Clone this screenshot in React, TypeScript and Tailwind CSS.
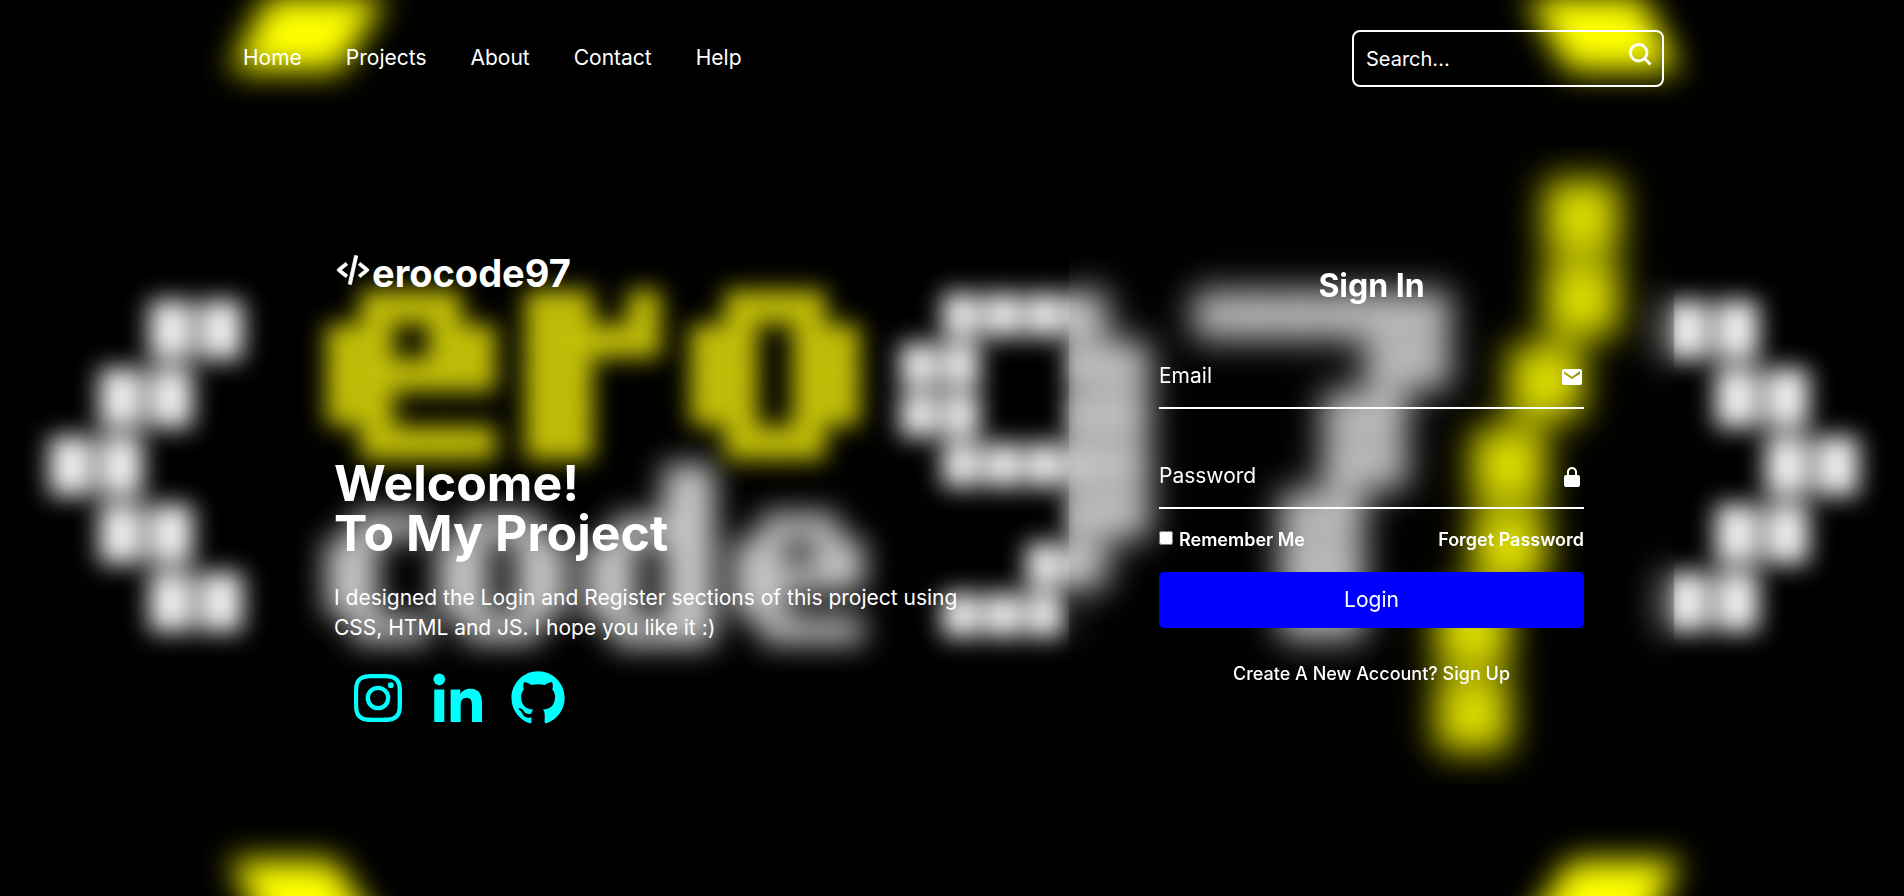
import type { ReactNode } from "react";
import {
  BiCodeAlt,
  BiLogoGithub,
  BiLogoInstagram,
  BiLogoLinkedin,
  BiSearch,
  BiSolidEnvelope,
  BiSolidLockAlt,
} from "react-icons/bi";

type Glyph = {
  x: number;
  y: number;
  w: number;
  h: number;
  gapX: number;
  gapY: number;
  fill: string;
  rows: string[];
};

const YELLOW = "#ccc808";
const GREY = "#c6c6c6";
const WHITE = "#f2f2f0";

const LETTER_E = [".###.", "##.##", "#####", "##...", ".####"];
const LETTER_O = [".###.", "##.##", "##.##", "##.##", ".###."];

const sharpGlyphs: Glyph[] = [
  { x: 46, y: 296, w: 50, h: 68, gapX: 7, gapY: 9, fill: WHITE, rows: ["..##", ".##.", "##..", ".##.", "..##"] },
  { x: 1662, y: 296, w: 50, h: 68, gapX: 7, gapY: 9, fill: WHITE, rows: ["##..", ".##.", "..##", ".##.", "##.."] },
  { x: 326, y: 290, w: 34, h: 34, gapX: 1, gapY: 1, fill: YELLOW, rows: LETTER_E },
  { x: 525, y: 290, w: 34, h: 34, gapX: 1, gapY: 1, fill: YELLOW, rows: ["##.#", "####", "##..", "##..", "##.."] },
  { x: 690, y: 290, w: 34, h: 34, gapX: 1, gapY: 1, fill: YELLOW, rows: LETTER_O },
  { x: 898, y: 290, w: 42, h: 50, gapX: 5, gapY: 6, fill: "#f0f0ee", rows: [".####.", "##..##", "##..##", ".#####", "....##", "...##.", ".###.."] },
  { x: 1193, y: 290, w: 43, h: 50, gapX: 4, gapY: 4, fill: "#dcdcda", rows: ["######", "....##", "...##.", "...##.", "..##..", "..##..", "..##.."] },
];

const softGlyphs: Glyph[] = [
  { x: 326, y: 512, w: 26, h: 26, gapX: 0, gapY: 0, fill: GREY, rows: [".###", "##..", "##..", "##..", ".###"] },
  { x: 437, y: 512, w: 26, h: 26, gapX: 0, gapY: 0, fill: GREY, rows: LETTER_O },
  { x: 585, y: 464, w: 26, h: 26, gapX: 0, gapY: 0, fill: GREY, rows: ["...##", "...##", ".####", "##.##", "##.##", "##.##", ".####"] },
  { x: 734, y: 513, w: 26, h: 26, gapX: 0, gapY: 0, fill: GREY, rows: LETTER_E },
];

const slash = [
  [1582, 217],
  [1582, 299],
  [1546, 382],
  [1509, 465],
  [1509, 548],
  [1473, 631],
  [1473, 714],
];

function Cells({ glyph: g }: { glyph: Glyph }) {
  return (
    <>
      {g.rows.map((row, r) =>
        row.split("").map((cell, c) =>
          cell === "#" ? (
            <rect
              key={`${r}-${c}`}
              x={g.x + c * g.w + g.gapX / 2}
              y={g.y + r * g.h + g.gapY / 2}
              width={g.w - g.gapX}
              height={g.h - g.gapY}
              fill={g.fill}
            />
          ) : null,
        ),
      )}
    </>
  );
}

function Backdrop() {
  return (
    <svg
      className="absolute inset-0 h-full w-full"
      viewBox="0 0 1904 896"
      preserveAspectRatio="none"
      aria-hidden="true"
    >
      <g className="blur-[15px]">
        {softGlyphs.map((g, i) => (
          <Cells key={i} glyph={g} />
        ))}
      </g>
      <g className="blur-[12px]">
        {sharpGlyphs.map((g, i) => (
          <Cells key={i} glyph={g} />
        ))}
        {slash.map(([x, y]) => (
          <rect key={y} x={x - 37} y={y - 37} width={74} height={74} fill="#e0e000" />
        ))}
      </g>
      <g className="blur-[16px]">
        <polygon points="268,-4 386,-4 340,71 230,71" fill="#ff0" />
        <polygon points="1526,-4 1642,-4 1680,71 1568,71" fill="#ff0" />
        <polygon points="229,860 334,860 392,950 276,950" fill="#ff0" />
        <polygon points="1570,860 1681,860 1634,950 1512,950" fill="#ff0" />
      </g>
    </svg>
  );
}

const links = ["Home", "Projects", "About", "Contact", "Help"];

function Field({ id, label, type, icon }: { id: string; label: string; type: string; icon: ReactNode }) {
  return (
    <div className="relative flex h-[50px] w-full items-center border-b-2 border-white">
      <label htmlFor={id} className="absolute left-0 top-0 text-[21px] leading-[34px]">
        {label}
      </label>
      <input id={id} type={type} className="h-full w-full bg-transparent pr-8 text-[21px] text-white outline-none" />
      <span className="absolute right-0 top-1.5 text-2xl">{icon}</span>
    </div>
  );
}

export default function App() {
  return (
    <div className="relative flex min-h-screen flex-col overflow-hidden bg-black font-['Inter',sans-serif] text-white">
      <Backdrop />

      <header className="relative mx-auto flex w-full max-w-[1424px] items-center justify-between pt-[30px]">
        <nav className="flex gap-11 pb-0.5 pl-[3px] text-[21px]">
          {links.map((l) => (
            <a key={l} href="#">
              {l}
            </a>
          ))}
        </nav>
        <form className="flex h-[57px] w-[312px] items-center rounded-lg border-2 border-white pl-3 pr-[7px]">
          <input
            type="text"
            aria-label="Search"
            placeholder="Search..."
            className="min-w-0 flex-1 bg-transparent text-xl text-white outline-none placeholder:text-white"
          />
          <button type="button" aria-label="Submit search" className="pb-2 text-[28px]">
            <BiSearch className="stroke-white stroke-[0.5]" />
          </button>
        </form>
      </header>

      <main className="relative mx-auto mt-[59px] flex w-full max-w-[1444px]">
        <section className="flex flex-1 flex-col pl-[104px] pt-[100px]">
          <h2 className="flex items-center text-[38px] font-bold leading-[54px]">
            <BiCodeAlt className="mb-1.5 h-[38px] w-[38px] stroke-white stroke-[0.5]" />
            erocode97
          </h2>
          <h1 className="mt-[158px] text-[50px] font-bold leading-[50px]">
            Welcome!
            <br />
            To My Project
          </h1>
          <p className="mt-[25px] max-w-[640px] text-[21px] leading-[30px]">
            I designed the Login and Register sections of this project using CSS, HTML and JS. I hope you like it :)
          </p>
          <div className="mt-[23px] flex gap-4 pl-3 text-[64px] text-[#00ffff]">
            <a href="#" aria-label="Instagram">
              <BiLogoInstagram />
            </a>
            <a href="#" aria-label="LinkedIn">
              <BiLogoLinkedin />
            </a>
            <a href="#" aria-label="GitHub">
              <BiLogoGithub />
            </a>
          </div>
        </section>

        <section className="w-[605px] px-[90px] pb-[96px] pt-[116px] backdrop-blur-[14px]">
          <form className="flex flex-col">
            <h2 className="text-center text-[32px] font-bold leading-[48px]">Sign In</h2>
            <div className="mt-[49px] flex flex-col gap-[50px]">
              <Field id="email" label="Email" type="email" icon={<BiSolidEnvelope />} />
              <Field id="password" label="Password" type="password" icon={<BiSolidLockAlt />} />
            </div>
            <div className="mt-[17px] flex justify-between text-lg font-semibold leading-7">
              <label className="flex items-center gap-1.5">
                <input type="checkbox" className="mb-1 h-[14px] w-[14px]" />
                Remember Me
              </label>
              <a href="#">Forget Password</a>
            </div>
            <button type="button" className="mt-[18px] h-14 w-full rounded-[5px] bg-[#0000ff] text-[21px]">
              Login
            </button>
            <p className="mt-[32px] text-center text-lg font-medium leading-7">
              Create A New Account? <a href="#">Sign Up</a>
            </p>
          </form>
        </section>
      </main>
    </div>
  );
}
